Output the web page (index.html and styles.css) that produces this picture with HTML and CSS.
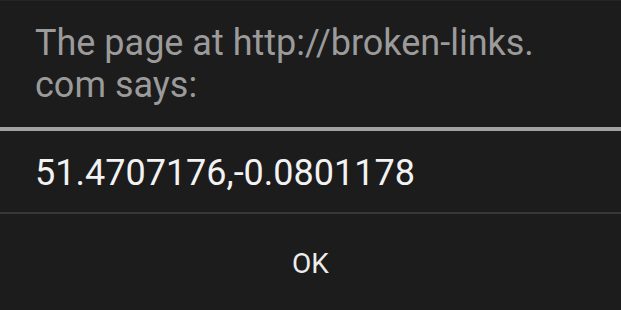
FILE: index.html
```html
<!DOCTYPE html>
<html>
<head>
<meta charset="utf-8">
<link rel="stylesheet" href="styles.css">
</head>
<body>
<div class="dialog">
  <div class="title">The page at http://broken-links.<br>com says:</div>
  <div class="divider"></div>
  <div class="message">51.4707176,-0.0801178</div>
  <div class="sep"></div>
  <div class="button">OK</div>
</div>
</body>
</html>
```
FILE: styles.css
```css
html, body {
  margin: 0;
  padding: 0;
  background: #1b1b1b;
}
.dialog {
  width: 621px;
  height: 310px;
  display: flex;
  flex-direction: column;
  background: #1c1c1c;
  border-top: 1px solid #262626;
  box-sizing: border-box;
  font-family: Roboto, "Liberation Sans", sans-serif;
}
.title {
  padding: 21px 35px 21px 35px;
  font-size: 36px;
  line-height: 42px;
  color: #9b9b9b;
  height: 84px;
}
.divider {
  height: 4px;
  background: #a2a2a2;
}
.message {
  padding: 21px 35px 18px 35px;
  font-size: 36px;
  line-height: 42px;
  color: #f2f2f2;
}
.sep {
  height: 2px;
  background: #383838;
}
.button {
  flex: 1;
  display: flex;
  align-items: center;
  justify-content: center;
  padding-top: 3px;
  font-size: 28px;
  color: #ececec;
}
```
